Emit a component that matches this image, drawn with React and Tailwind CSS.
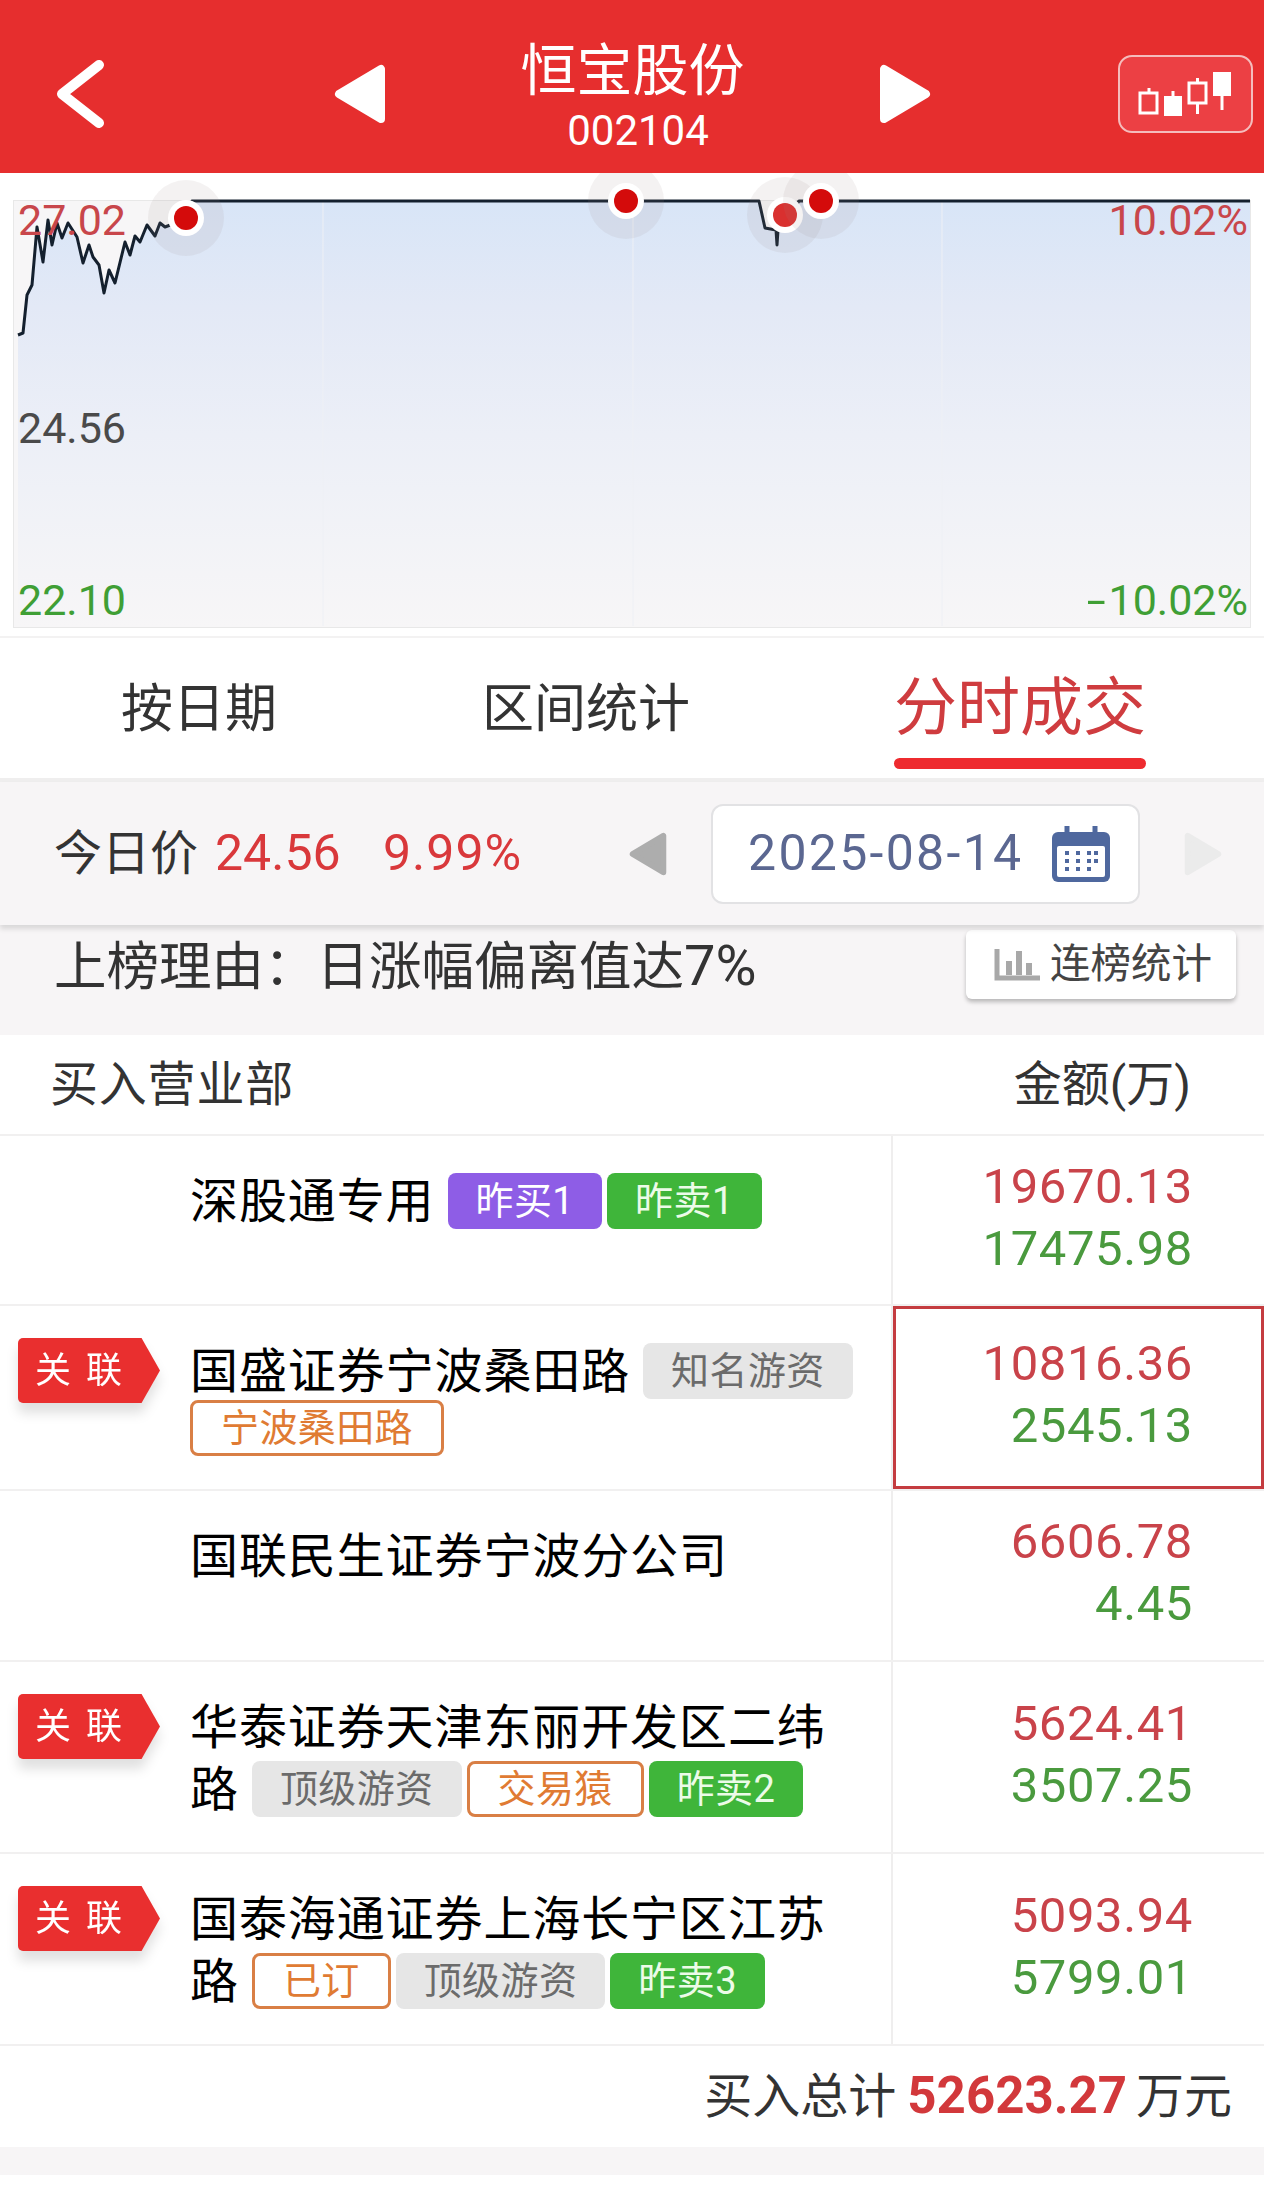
import React from 'react';

const pricePoints = '18,335 23,333 27,295 32,285 37,227 43,262 48,220 52,245 57,223 62,238 68,223 77,237 83,263 89,245 93,257 99,265 104,293 109,270 115,283 125,242 130,255 135,236 140,242 147,225 155,236 160,223 165,227 186,219 192,201 759,201 765,228 776,230 777,245 778,230 799,201 1250,201';

const rows = [
  { h: 'h-[170px]', lines: 'pt-[35px] leading-[62px]', name: '深股通专用', tags: [['昨买1', 'purple'], ['昨卖1', 'green']], buy: '19670.13', sell: '17475.98' },
  { h: 'h-[185px]', lines: 'pt-[37px] leading-[57px]', link: true, selected: true, name: '国盛证券宁波桑田路', tags: [['知名游资', 'gray'], ['宁波桑田路', 'orange']], buy: '10816.36', sell: '2545.13' },
  { h: 'h-[171px]', lines: 'pt-[35px] leading-[62px]', name: '国联民生证券宁波分公司', tags: [], buy: '6606.78', sell: '4.45' },
  { h: 'h-[192px]', lines: 'pt-[35px] leading-[62px]', link: true, name: '华泰证券天津东丽开发区二纬路', tags: [['顶级游资', 'gray'], ['交易猿', 'orange'], ['昨卖2', 'green']], buy: '5624.41', sell: '3507.25' },
  { h: 'h-[192px]', lines: 'pt-[35px] leading-[62px]', link: true, name: '国泰海通证券上海长宁区江苏路', tags: [['已订', 'orange'], ['顶级游资', 'gray'], ['昨卖3', 'green']], buy: '5093.94', sell: '5799.01' },
];

const tagStyles = {
  purple: 'bg-[#8e5de6] text-white',
  green: 'bg-[#3fb53a] text-[#ecfbe8]',
  gray: 'bg-[#e6e6e6] text-[#6b6b6b]',
  orange: 'bg-white text-[#e07b33] border-[3px] border-[#d97f45]',
};

const Triangle = ({ left, color, className }) => (
  <svg viewBox="0 0 52 60" className={className}>
    <polygon
      points={left ? '47,5 47,55 5,30' : '5,5 5,55 47,30'}
      fill={color}
      stroke={color}
      strokeWidth="8"
      strokeLinejoin="round"
    />
  </svg>
);

const Dot = ({ cx, cy, color = '#d40b0b' }) => (
  <g>
    <circle cx={cx} cy={cy} r="38" fill="#9a8a8a" fillOpacity="0.11" />
    <circle cx={cx} cy={cy} r="18" fill="#fff" />
    <circle cx={cx} cy={cy} r="12" fill={color} />
  </g>
);

const Chart = () => (
  <div className="relative h-[463px] bg-white pt-[27px] px-[13px]">
    <div className="relative h-[428px] bg-[#f7f6f7] border border-[#e8e8e8] text-[43px] leading-none">
      <span className="absolute z-10 left-[4px] top-[-2px] text-[#c8464b]">27.02</span>
      <span className="absolute z-10 right-[2px] top-[-2px] text-[#c8464b]">10.02%</span>
      <span className="absolute z-10 left-[4px] top-[206px] text-[#4a4a4a]">24.56</span>
      <span className="absolute z-10 left-[4px] bottom-[5px] text-[#3f9f35]">22.10</span>
      <span className="absolute z-10 right-[2px] bottom-[5px] text-[#3f9f35]"><span className="inline-block scale-x-[1.6] origin-right mr-[3px]">-</span>10.02%</span>
    </div>
    <svg viewBox="0 173 1264 463" className="absolute inset-0 w-full h-full">
      <defs>
        <linearGradient id="area" x1="0" y1="200" x2="0" y2="627" gradientUnits="userSpaceOnUse">
          <stop offset="0" stopColor="#d8e5f7" />
          <stop offset="0.25" stopColor="#e3e9f6" />
          <stop offset="0.55" stopColor="#eceff7" />
          <stop offset="1" stopColor="#f7f6f7" />
        </linearGradient>
      </defs>
      <polygon points={`${pricePoints} 1250,626 18,626`} fill="url(#area)" />
      <path d="M323 202V626M633 202V626M942 202V626" stroke="#eef0f5" strokeWidth="1" />
      <polyline points={pricePoints} fill="none" stroke="#14202e" strokeWidth="3" strokeLinejoin="round" />
      <Dot cx={186} cy={218} />
      <Dot cx={626} cy={201} />
      <Dot cx={785} cy={215} color="#d9302f" />
      <Dot cx={821} cy={201} />
    </svg>
  </div>
);

const Tag = ({ label, kind }) => (
  <span className={`inline-flex items-center justify-center align-[4px] h-[56px] -my-[12px] px-[28px] mr-[5px] rounded-[8px] text-[38px] tracking-[0.4px] leading-none ${tagStyles[kind]}`}>
    {label}
  </span>
);

const Row = ({ row }) => (
  <div className={`flex border-b-2 border-[#f1f0f0] ${row.h}`}>
    <div className="w-[190px] shrink-0 pl-[18px] pt-[32px]">
      {row.link && (
        <div className="w-[142px] drop-shadow-[0_10px_6px_rgba(0,0,0,0.12)]">
          <div className="flex items-center h-[65px] pl-[17px] gap-[15px] bg-[#e92f2f] text-white text-[36px] leading-none rounded-l-[5px] [clip-path:polygon(0_0,87%_0,100%_50%,87%_100%,0_100%)]">
            <span>关</span>
            <span>联</span>
          </div>
        </div>
      )}
    </div>
    <div className={`w-[672px] text-[48px] tracking-[0.9px] text-black ${row.lines}`}>
      {row.name}
      <span className="inline-block w-[13px]" />
      {row.tags.map(([label, kind]) => <Tag key={label} label={label} kind={kind} />)}
    </div>
    <div className="relative flex-1 flex flex-col items-end justify-center pr-[71px] pb-[5px] ml-[29px] border-l-2 border-[#efeeee] text-[49px] tracking-[0.6px] leading-[62px]">
      {row.selected && <div className="absolute inset-y-0 left-0 right-0 border-[3px] border-[#c43c40]" />}
      <span className="text-[#c9434a]">{row.buy}</span>
      <span className="text-[#4a9a3e]">{row.sell}</span>
    </div>
  </div>
);

export default function App() {
  return (
    <div className="w-[1264px] h-[2191px] overflow-hidden bg-white font-[Roboto,'Noto_Sans_CJK_SC',sans-serif]">
      <header className="flex items-center h-[173px] pt-[14px] bg-[#e62e2e] text-white">
        <svg viewBox="0 0 48 68" className="w-[48px] h-[68px] ml-[56px] shrink-0">
          <polyline points="43,5 6,34 43,63" fill="none" stroke="#fff" strokeWidth="10" strokeLinecap="round" strokeLinejoin="round" />
        </svg>
        <Triangle left color="#fff" className="w-[52px] h-[60px] ml-[230px] shrink-0" />
        <div className="w-[493px] shrink-0 text-center mt-[7px]">
          <div className="text-[56px] leading-[62px]">恒宝股份</div>
          <div className="text-[42px] leading-[46px] mt-[6px] pl-[11px]">002104</div>
        </div>
        <Triangle color="#fff" className="w-[52px] h-[60px] shrink-0" />
        <div className="flex items-center justify-center w-[135px] h-[78px] ml-[187px] mr-[11px] border-2 border-[#f5bcbc] rounded-[14px] bg-[#ec4044] shrink-0">
          <svg viewBox="1136 68 100 50" className="w-[100px] h-[50px]">
            <path d="M1140 92H1157V112H1140ZM1149 92V87" fill="none" stroke="#fff" strokeWidth="3" />
            <path d="M1164 95H1182V115H1164Z" fill="#fff" />
            <path d="M1173 95V90" stroke="#fff" strokeWidth="3" />
            <path d="M1189 82H1206V102H1189ZM1197.5 82V77M1197.5 102V113" fill="none" stroke="#fff" strokeWidth="3" />
            <path d="M1213 71H1231V95H1213Z" fill="#fff" />
            <path d="M1222 95V109" stroke="#fff" strokeWidth="3" />
          </svg>
        </div>
      </header>

      <Chart />

      <div className="flex h-[146px] border-t-2 border-[#f3f2f2] border-b-4 border-b-[#efeeee] text-[52px] text-[#333]">
        <div className="w-[398px] flex justify-center pt-[33px]">按日期</div>
        <div className="w-[376px] flex justify-center pt-[33px]">区间统计</div>
        <div className="ml-[120px] w-[252px] flex flex-col items-center">
          <span className="text-[63px] leading-[80px] text-[#cf3c3f] mt-[30px] whitespace-nowrap">分时成交</span>
          <span className="w-[252px] h-[11px] rounded-full bg-[#ee2b2f] mt-[10px]" />
        </div>
      </div>

      <div className="flex items-center h-[143px] bg-[#f7f5f6] pl-[54px] shadow-[0_4px_5px_rgba(0,0,0,0.12)] relative text-[48px]">
        <span className="text-[#333] w-[161px]">今日价</span>
        <span className="text-[#d9383b] w-[168px] text-[50px]">24.56</span>
        <span className="text-[#d9383b] w-[246px] text-[50px] tracking-[1px]">9.99%</span>
        <Triangle left color="#adadad" className="w-[38px] h-[50px]" />
        <div className="flex items-center w-[429px] h-[100px] ml-[44px] pl-[35px] bg-white rounded-[12px] border-2 border-[#e2e2e4] text-[#5b6791]">
          <span className="w-[304px] whitespace-nowrap text-[50px] tracking-[2.3px]">2025-08-14</span>
          <svg viewBox="0 0 58 56" className="w-[58px] h-[56px]">
            <rect x="0" y="6" width="58" height="50" rx="6" fill="#4f689e" />
            <rect x="5" y="20" width="48" height="31" rx="2" fill="#fff" />
            <path d="M15 0V12M43 0V12" stroke="#4f689e" strokeWidth="5" />
            <path d="M13 27H17M24 27H28M35 27H39M13 35H17M24 35H28M35 35H39M46 27H42M46 35H42M13 43H17M24 43H28M35 43H39" stroke="#4f689e" strokeWidth="4" />
          </svg>
        </div>
        <Triangle color="#ebebeb" className="w-[38px] h-[50px] ml-[44px]" />
      </div>

      <div className="flex justify-between h-[110px] bg-[#f7f5f6] pl-[54px] pr-[28px]">
        <span className="text-[52.5px] text-[#333] mt-[6px] leading-[70px] whitespace-nowrap">上榜理由：日涨幅偏离值达<span className="text-[56px]">7%</span></span>
        <div className="flex items-center h-[69px] w-[270px] mt-[5px] pl-[28px] bg-white rounded-[6px] shadow-[0_3px_4px_rgba(0,0,0,0.25)] text-[40.5px] text-[#444]">
          <svg viewBox="0 0 46 32" className="w-[46px] h-[32px] mr-[10px]">
            <path d="M3 0V29H46" fill="none" stroke="#a8a8a8" strokeWidth="5" />
            <path d="M15 12V26M25 2V26M35 14V26" stroke="#a8a8a8" strokeWidth="6" />
          </svg>
          连榜统计
        </div>
      </div>

      <div className="flex items-center justify-between h-[101px] border-b-2 border-[#f1f0f0] pl-[50px] pr-[73px] text-[48px] text-[#333]">
        <span className="tracking-[0.8px]">买入营业部</span>
        <span>金额(万)</span>
      </div>

      {rows.map((row) => <Row key={row.name} row={row} />)}

      <div className="flex items-center justify-end h-[101px] pr-[32px] text-[48px] text-[#333]">
        <span>买入总计</span>
        <span className="ml-[11px] mr-[9px] text-[51px] font-bold text-[#d2383b]">52623.27</span>
        <span>万元</span>
      </div>
      <div className="h-[28px] bg-[#f7f5f6]" />
    </div>
  );
}
